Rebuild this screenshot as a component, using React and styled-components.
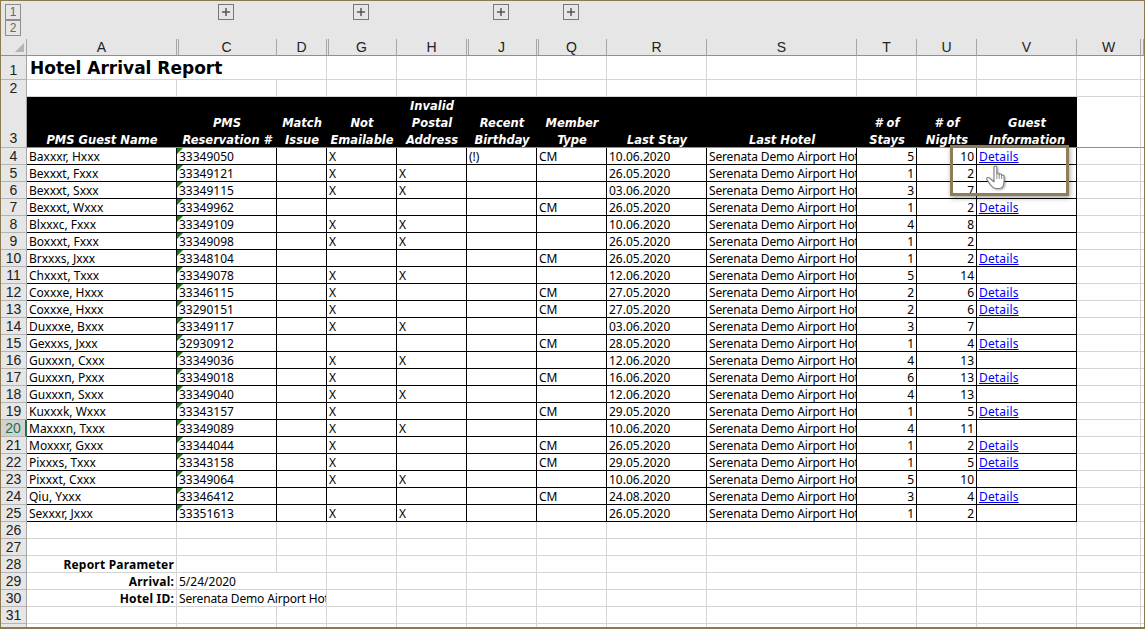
import styled, { createGlobalStyle } from "styled-components";
import { Plus } from "lucide-react";

const frameColor = "#8c7b52";
const gridLine = "#d4d4d4";
const chrome = "#e6e6e6";
const chromeLine = "#a6a6a6";
const bodyFont = '"Noto Sans", "DejaVu Sans", sans-serif';
const headerFont = '"DejaVu Sans", Verdana, sans-serif';

// widths of the visible sheet columns, W is the last full one
const columnTemplate = "150px 100px 50px 70px 70px 70px 70px 100px 150px 60px 60px 100px 64px 1fr";

const columns = [
  { name: "A" },
  { name: "C", double: true },
  { name: "D" },
  { name: "G", double: true },
  { name: "H" },
  { name: "J", double: true },
  { name: "Q", double: true },
  { name: "R" },
  { name: "S" },
  { name: "T" },
  { name: "U" },
  { name: "V" },
  { name: "W" },
  { name: "" },
];

const headers = [
  ["PMS Guest Name"],
  ["PMS", "Reservation #"],
  ["Match", "Issue"],
  ["Not", "Emailable"],
  ["Invalid", "Postal", "Address"],
  ["Recent", "Birthday"],
  ["Member", "Type"],
  ["Last Stay"],
  ["Last Hotel"],
  ["# of", "Stays"],
  ["# of", "Nights"],
  ["Guest", "Information"],
];

// name, reservation, not emailable, invalid address, birthday, member, last stay, stays, nights, details
const guests = [
  ["Baxxxr, Hxxx", "33349050", "X", "", "(!)", "CM", "10.06.2020", 5, 10, true],
  ["Bexxxt, Fxxx", "33349121", "X", "X", "", "", "26.05.2020", 1, 2, false],
  ["Bexxxt, Sxxx", "33349115", "X", "X", "", "", "03.06.2020", 3, 7, false],
  ["Bexxxt, Wxxx", "33349962", "", "", "", "CM", "26.05.2020", 1, 2, true],
  ["Blxxxc, Fxxx", "33349109", "X", "X", "", "", "10.06.2020", 4, 8, false],
  ["Boxxxt, Fxxx", "33349098", "X", "X", "", "", "26.05.2020", 1, 2, false],
  ["Brxxxs, Jxxx", "33348104", "", "", "", "CM", "26.05.2020", 1, 2, true],
  ["Chxxxt, Txxx", "33349078", "X", "X", "", "", "12.06.2020", 5, 14, false],
  ["Coxxxe, Hxxx", "33346115", "X", "", "", "CM", "27.05.2020", 2, 6, true],
  ["Coxxxe, Hxxx", "33290151", "X", "", "", "CM", "27.05.2020", 2, 6, true],
  ["Duxxxe, Bxxx", "33349117", "X", "X", "", "", "03.06.2020", 3, 7, false],
  ["Gexxxs, Jxxx", "32930912", "", "", "", "CM", "28.05.2020", 1, 4, true],
  ["Guxxxn, Cxxx", "33349036", "X", "X", "", "", "12.06.2020", 4, 13, false],
  ["Guxxxn, Pxxx", "33349018", "X", "", "", "CM", "16.06.2020", 6, 13, true],
  ["Guxxxn, Sxxx", "33349040", "X", "X", "", "", "12.06.2020", 4, 13, false],
  ["Kuxxxk, Wxxx", "33343157", "X", "", "", "CM", "29.05.2020", 1, 5, true],
  ["Maxxxn, Txxx", "33349089", "X", "X", "", "", "10.06.2020", 4, 11, false],
  ["Moxxxr, Gxxx", "33344044", "X", "", "", "CM", "26.05.2020", 1, 2, true],
  ["Pixxxs, Txxx", "33343158", "X", "", "", "CM", "29.05.2020", 1, 5, true],
  ["Pixxxt, Cxxx", "33349064", "X", "X", "", "", "10.06.2020", 5, 10, false],
  ["Qiu, Yxxx", "33346412", "", "", "", "CM", "24.08.2020", 3, 4, true],
  ["Sexxxr, Jxxx", "33351613", "X", "X", "", "", "26.05.2020", 1, 2, false],
];

const GlobalStyle = createGlobalStyle`
  html, body {
    margin: 0;
    padding: 0;
    background: #fff;
    overflow: hidden;
  }
  * { box-sizing: border-box; }
`;

const Frame = styled.div`
  position: relative;
  width: 1145px;
  height: 629px;
  overflow: hidden;
  border: 1px solid ${frameColor};
  border-bottom-width: 2px;
  background: #fff;
  font-family: ${bodyFont};
  font-size: 12px;
  color: #000;
`;

const OutlineBar = styled.div`
  display: flex;
  align-items: flex-start;
  height: 38px;
  padding: 3px 0 0 4px;
  background: ${chrome};
`;

const LevelButtons = styled.div`
  display: flex;
  flex-direction: column;
`;

const LevelButton = styled.div`
  width: 16px;
  height: 16px;
  display: flex;
  align-items: center;
  justify-content: center;
  border: 1px solid #8e8e8e;
  font-family: "Liberation Sans", Arial, sans-serif;
  font-size: 12px;
  color: #666;
`;

const GroupButton = styled.div`
  width: 16px;
  height: 16px;
  margin-left: ${(p) => p.$offset}px;
  display: flex;
  align-items: center;
  justify-content: center;
  border: 1px solid #777;
  color: #555;
`;

const Row = styled.div`
  display: grid;
  grid-template-columns: 26px ${columnTemplate};
  height: ${(p) => p.$height || 17}px;
`;

const SelectAll = styled.div`
  position: relative;
  background: ${chrome};
  border-right: 1px solid ${chromeLine};
  border-bottom: 1px solid #8f8f8f;

  &::after {
    content: "";
    position: absolute;
    right: 2px;
    bottom: 3px;
    width: 9px;
    height: 9px;
    background: #b4b4b4;
    clip-path: polygon(100% 0, 100% 100%, 0 100%);
  }
`;

const ColumnHead = styled.div`
  display: flex;
  align-items: center;
  justify-content: center;
  background: ${chrome};
  border-right: 1px solid ${chromeLine};
  border-bottom: 1px solid #8f8f8f;
  font-family: "Liberation Sans", Arial, sans-serif;
  font-size: 14px;
  color: #222;
  ${(p) => p.$double && `box-shadow: inset 1px 0 0 ${chrome}, inset 2px 0 0 ${chromeLine};`}
`;

const RowHead = styled.div`
  display: flex;
  align-items: ${(p) => (p.$low ? "flex-end" : "center")};
  justify-content: center;
  padding-bottom: ${(p) => (p.$low ? 1 : 0)}px;
  background: ${(p) => (p.$active ? "#d2d2d2" : chrome)};
  border-bottom: 1px solid #b4b4b4;
  border-right: ${(p) => (p.$active ? "2px solid #217346" : `1px solid ${chromeLine}`)};
  font-family: "Liberation Sans", Arial, sans-serif;
  font-size: 14px;
  color: ${(p) => (p.$active ? "#217346" : "#222")};
`;

const Cell = styled.div`
  position: relative;
  overflow: hidden;
  white-space: nowrap;
  padding: 0 2px;
  line-height: 18px;
  text-align: ${(p) => p.$align || "left"};
  letter-spacing: ${(p) => p.$tracking || 0}px;
  border-right: 1px solid ${gridLine};
  border-bottom: 1px solid ${gridLine};
  ${(p) => p.$span && `grid-column: span ${p.$span};`}
  ${(p) => p.$bold && "font-weight: bold;"}
`;

const DataCell = styled(Cell)`
  border-color: #000;
  ${(p) =>
    p.$flag &&
    `&::before {
      content: "";
      position: absolute;
      left: 0;
      top: 0;
      width: 6px;
      height: 6px;
      background: #1a7d1a;
      clip-path: polygon(0 0, 100% 0, 0 100%);
    }`}
`;

const TitleCell = styled(Cell)`
  font-family: ${headerFont};
  font-size: 17px;
  font-weight: bold;
  line-height: 24px;
  padding-left: 3px;
`;

const HeaderCell = styled.div`
  display: flex;
  flex-direction: column;
  justify-content: flex-end;
  align-items: center;
  background: #000;
  color: #fff;
  font-family: ${headerFont};
  font-size: 11.5px;
  font-weight: bold;
  font-style: italic;
  line-height: 17px;
  white-space: nowrap;
  border-bottom: 1px solid #8f8f8f;

  span {
    position: relative;
    top: 2px;
  }
`;

const FreezeCell = styled(Cell)`
  border-bottom-color: #8f8f8f;
`;

const DetailsLink = styled.a`
  color: #0000ff;
  text-decoration: underline;
  letter-spacing: 0.15px;
`;

const Callout = styled.div`
  position: absolute;
  left: 949px;
  top: 144px;
  width: 119px;
  height: 51px;
  border: 3px solid #8f7d57;
  box-shadow: 1px 2px 5px rgba(0, 0, 0, 0.35);
`;

const HandCursor = styled.svg`
  position: absolute;
  left: 983px;
  top: 163px;
  width: 24px;
  height: 26px;
  filter: drop-shadow(1px 1px 1px rgba(0, 0, 0, 0.3));
`;

function Hand() {
  return (
    <HandCursor viewBox="0 0 24 26">
      <path
        d="M10 3.2C10 1.6 12.8 1.6 12.8 3.2V10C12.8 8.6 15.2 8.6 15.2 10V11C15.2 9.6 17.6 9.6 17.6 11V12C17.6 10.6 20 10.6 20 12V17.5C20 21.5 18.4 24.5 15.4 24.5H11.6C9.6 24.5 8.6 23.4 7.2 21.5L3 15.8C2 14.2 4 12.6 5.6 14.2L10 18Z"
        fill="#fff"
        stroke="#7d7d7d"
        strokeWidth="1.1"
        strokeLinejoin="round"
      />
      <path d="M12.8 10V15M15.2 11V15M17.6 12V15" stroke="#8d8d8d" strokeWidth="1" fill="none" />
    </HandCursor>
  );
}

function EmptyCells({ count }) {
  return Array.from({ length: count }, (_, i) => <Cell key={i} />);
}

function GuestRow({ guest, number }) {
  const [name, reservation, noEmail, badAddress, birthday, member, lastStay, stays, nights, details] = guest;
  return (
    <Row>
      <RowHead $active={number === 20}>{number}</RowHead>
      <DataCell>{name}</DataCell>
      <DataCell $flag>{reservation}</DataCell>
      <DataCell />
      <DataCell>{noEmail}</DataCell>
      <DataCell>{badAddress}</DataCell>
      <DataCell>{birthday}</DataCell>
      <DataCell>{member}</DataCell>
      <DataCell>{lastStay}</DataCell>
      <DataCell $tracking={-0.15}>Serenata Demo Airport Hotel</DataCell>
      <DataCell $align="right">{stays}</DataCell>
      <DataCell $align="right">{nights}</DataCell>
      <DataCell>{details && <DetailsLink href="#details">Details</DetailsLink>}</DataCell>
      <EmptyCells count={2} />
    </Row>
  );
}

export default function App() {
  return (
    <Frame>
      <GlobalStyle />
      <OutlineBar>
        <LevelButtons>
          <LevelButton>1</LevelButton>
          <LevelButton>2</LevelButton>
        </LevelButtons>
        {[197, 119, 124, 54].map((offset) => (
          <GroupButton key={offset} $offset={offset}>
            <Plus size={12} strokeWidth={3} />
          </GroupButton>
        ))}
      </OutlineBar>

      <Row>
        <SelectAll />
        {columns.map((col, i) => (
          <ColumnHead key={i} $double={col.double}>
            {col.name}
          </ColumnHead>
        ))}
      </Row>

      <Row $height={24}>
        <RowHead $low>1</RowHead>
        <TitleCell $span={3}>Hotel Arrival Report</TitleCell>
        <EmptyCells count={11} />
      </Row>

      <Row $height={16}>
        <RowHead>2</RowHead>
        <EmptyCells count={14} />
      </Row>

      <Row $height={52}>
        <RowHead $low>3</RowHead>
        {headers.map((lines, i) => (
          <HeaderCell key={i}>
            {lines.map((line) => (
              <span key={line}>{line}</span>
            ))}
          </HeaderCell>
        ))}
        <FreezeCell />
        <FreezeCell />
      </Row>

      {guests.map((guest, i) => (
        <GuestRow key={i} guest={guest} number={i + 4} />
      ))}

      {[26, 27].map((n) => (
        <Row key={n}>
          <RowHead>{n}</RowHead>
          <EmptyCells count={14} />
        </Row>
      ))}

      <Row>
        <RowHead>28</RowHead>
        <Cell $align="right" $bold $tracking={0.2}>Report Parameter</Cell>
        <EmptyCells count={13} />
      </Row>
      <Row>
        <RowHead>29</RowHead>
        <Cell $align="right" $bold $tracking={0.2}>Arrival:</Cell>
        <Cell $span={2}>5/24/2020</Cell>
        <EmptyCells count={11} />
      </Row>
      <Row>
        <RowHead>30</RowHead>
        <Cell $align="right" $bold $tracking={0.2}>Hotel ID:</Cell>
        <Cell $span={2} $tracking={-0.15}>Serenata Demo Airport Hotel</Cell>
        <EmptyCells count={11} />
      </Row>
      {[31, 32].map((n) => (
        <Row key={n}>
          <RowHead>{n === 32 ? "" : n}</RowHead>
          <EmptyCells count={14} />
        </Row>
      ))}

      <Callout />
      <Hand />
    </Frame>
  );
}
